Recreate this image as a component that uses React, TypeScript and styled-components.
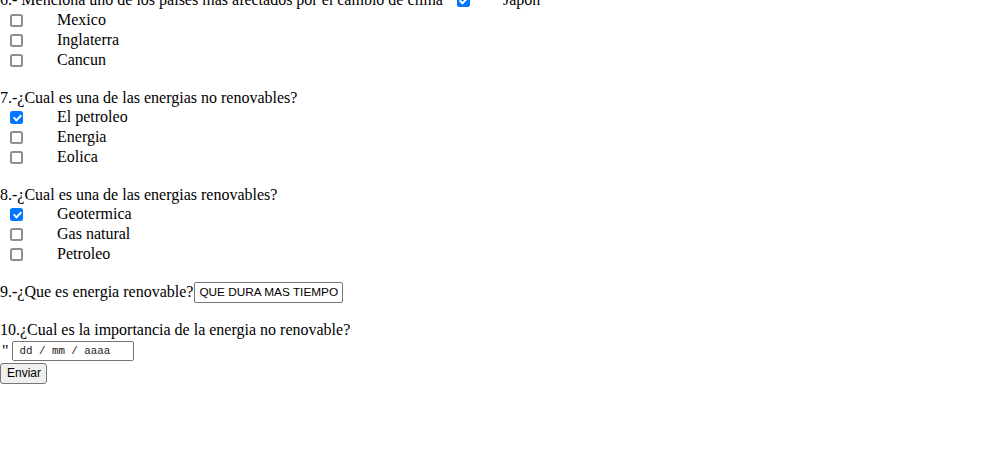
import React from "react";
import styled, { createGlobalStyle } from "styled-components";

const Global = createGlobalStyle`
  html, body { margin: 0; padding: 0; background: #ffffff; }
  body { font-family: "Liberation Serif", "Times New Roman", serif; font-size: 16px; color: #000; overflow: hidden; }
`;

const Form = styled.form`
  display: flex;
  flex-direction: column;
  margin-top: -10px;
`;

const Row = styled.div<{ $h?: number }>`
  display: flex;
  align-items: center;
  height: ${(p) => p.$h ?? 20}px;
  white-space: nowrap;
`;

const QuestionLine = styled.div`
  height: 18.5px;
  line-height: 18.5px;
  white-space: nowrap;
`;

const Spacer = styled.div<{ $h?: number }>`
  height: ${(p) => p.$h ?? 18.5}px;
`;

const Check = styled.input.attrs({ type: "checkbox" })<{ $ml?: number }>`
  appearance: none;
  -webkit-appearance: none;
  box-sizing: border-box;
  position: relative;
  width: 13px;
  height: 13px;
  margin: 0 0 0 ${(p) => p.$ml ?? 10}px;
  flex: none;
  border: 2px solid #8d8d93;
  border-radius: 2.5px;
  background: #fff;

  &:checked {
    background: #0075ff;
    border-color: #0075ff;
  }
  &:checked::after {
    content: "";
    position: absolute;
    left: 2.5px;
    top: 0px;
    width: 3px;
    height: 6px;
    border: solid #fff;
    border-width: 0 2px 2px 0;
    transform: rotate(45deg);
  }
`;

const Label = styled.span<{ $ml?: number }>`
  margin-left: ${(p) => p.$ml ?? 34}px;
`;

const TextBox = styled.input`
  box-sizing: border-box;
  width: 149px;
  height: 21px;
  margin: 0 0 0 1px;
  padding: 1px 4px;
  border: 1px solid #767676;
  border-radius: 2px;
  font-family: "Liberation Sans", Arial, sans-serif;
  font-size: 11.8px;
  color: #000;
  background: #fff;
`;

const Quote = styled.span`
  margin-left: 2px;
`;

const DateBox = styled.div`
  box-sizing: border-box;
  width: 122px;
  height: 20px;
  margin-left: 3px;
  padding: 0 0 0 7px;
  display: flex;
  align-items: center;
  border: 1px solid #767676;
  border-radius: 2px;
  font-family: "Liberation Mono", "Courier New", monospace;
  font-size: 10.8px;
  color: #222;
  background: #fff;
`;

const Submit = styled.button`
  box-sizing: border-box;
  height: 21px;
  width: 47px;
  margin: 0;
  padding: 1px 6px;
  border: 1px solid #767676;
  border-radius: 3px;
  background: #efefef;
  font-family: "Liberation Sans", Arial, sans-serif;
  font-size: 12px;
  color: #000;
`;

type Opt = { label: string; checked?: boolean };
const q7: Opt[] = [{ label: "El petroleo", checked: true }, { label: "Energia" }, { label: "Eolica" }];
const q8: Opt[] = [{ label: "Geotermica", checked: true }, { label: "Gas natural" }, { label: "Petroleo" }];
const q6: Opt[] = [{ label: "Mexico" }, { label: "Inglaterra" }, { label: "Cancun" }];

const Options = ({ items }: { items: Opt[] }) => (
  <>
    {items.map((o) => (
      <Row key={o.label}>
        <Check defaultChecked={o.checked} />
        <Label>{o.label}</Label>
      </Row>
    ))}
  </>
);

export default function App() {
  return (
    <>
      <Global />
      <Form onSubmit={(e) => e.preventDefault()}>
        <Row>
          <span>6.- Menciona uno de los paises mas afectados por el cambio de clima</span>
          <Check $ml={14} defaultChecked />
          <Label $ml={33}>Japon</Label>
        </Row>
        <Options items={q6} />
        <Spacer />
        <QuestionLine>7.-¿Cual es una de las energias no renovables?</QuestionLine>
        <Options items={q7} />
        <Spacer />
        <QuestionLine>8.-¿Cual es una de las energias renovables?</QuestionLine>
        <Options items={q8} />
        <Spacer $h={17.5} />
        <Row $h={21}>
          <span>9.-¿Que es energia renovable?</span>
          <TextBox defaultValue="QUE DURA MAS TIEMPO" />
        </Row>
        <Spacer />
        <QuestionLine>10.¿Cual es la importancia de la energia no renovable?</QuestionLine>
        <Row $h={23}>
          <Quote>"</Quote>
          <DateBox>dd / mm / aaaa</DateBox>
        </Row>
        <Row $h={21}>
          <Submit type="submit">Enviar</Submit>
        </Row>
      </Form>
    </>
  );
}
